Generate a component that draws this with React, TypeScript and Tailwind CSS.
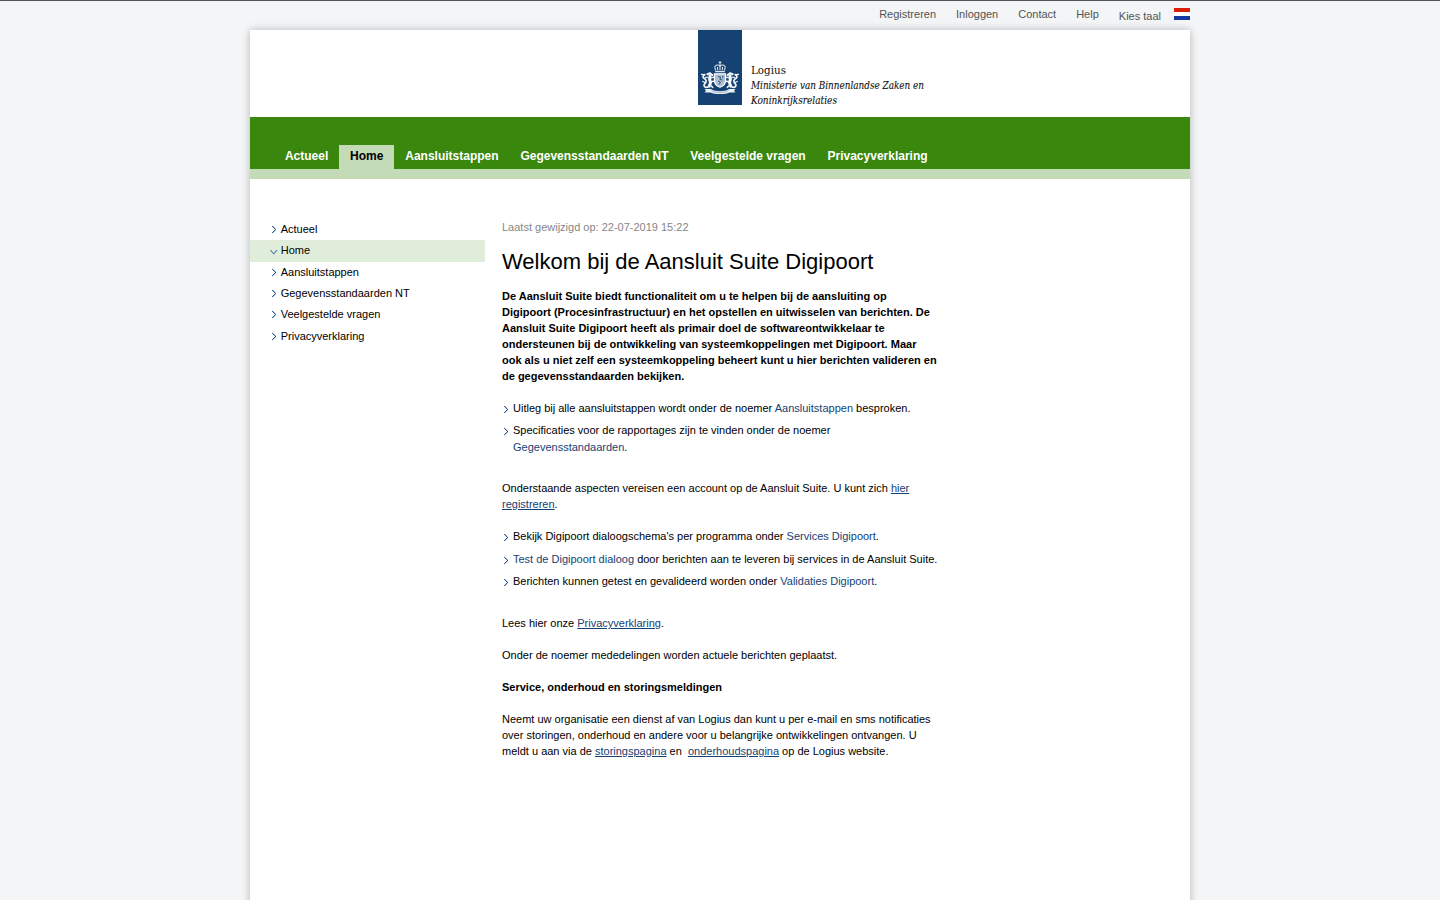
import type { ReactNode } from "react";

const tabs = ["Actueel", "Home", "Aansluitstappen", "Gegevensstandaarden NT", "Veelgestelde vragen", "Privacyverklaring"];

function ChevronRight({ className = "" }: { className?: string }) {
  return (
    <svg width="5" height="9" viewBox="0 0 5 9" className={className} fill="#2c5f92" shapeRendering="crispEdges">
      <path d="M0 1h1v1H0zM1 2h1v1H1zM2 3h1v1H2zM3 4h1v1H3zM2 5h1v1H2zM1 6h1v1H1zM0 7h1v1H0z" />
      <path d="M1 1h1v1H1zM2 2h1v1H2zM3 3h1v1H3zM3 5h1v1H3zM2 6h1v1H2zM1 7h1v1H1z" opacity="0.35" />
    </svg>
  );
}

function ChevronDown({ className = "" }: { className?: string }) {
  return (
    <svg width="8" height="6" viewBox="0 0 8 6" className={className} fill="none" stroke="#4f7fa6" strokeWidth="1.1">
      <path d="M0.4 1.2L3.75 4.8L7.1 1.2" />
    </svg>
  );
}

function Flag() {
  return (
    <svg width="16" height="12" viewBox="0 0 16 12" shapeRendering="crispEdges">
      <rect width="16" height="4" fill="#d81e05" />
      <rect y="4" width="16" height="4" fill="#fff" />
      <rect y="8" width="16" height="4" fill="#1539a0" />
    </svg>
  );
}

function Lion() {
  return (
    <g fill="none" stroke="#f4f7fa" strokeLinecap="round" strokeLinejoin="round">
      <path d="M12 17L11.6 20.5L12.6 23.5L11.2 27.2" strokeWidth="3" />
      <path d="M12.6 19.2L15.6 18.2M12.6 22.8L15.8 22.2M12 26L14.8 28.4" strokeWidth="1.4" />
      <path d="M9.4 15.2L12 14.2L14.2 16" strokeWidth="2.1" />
      <path d="M9.6 28.2C6 28.8 5 26.2 7 24.4C8.8 22.6 8.4 20.8 6.4 19.6C4.6 18.6 4.6 16.4 6.8 15.6" strokeWidth="1.7" />
      <path d="M3.4 15.4L6 15.6M4.8 22.4L7 23.6M7.6 18.4L10 18.2" strokeWidth="1.1" />
    </g>
  );
}

function Logo() {
  return (
    <svg width="320" height="84" viewBox="0 0 320 84" role="img">
      <rect width="44" height="75" fill="#154273" />
      <g fill="none" stroke="#dce5ee" strokeWidth="1.05">
        <path d="M17.5 40.5L16.8 37C17.4 34.6 20 34.6 22 36.2C24 34.6 26.6 34.6 27.2 37L26.5 40.5" />
        <path d="M22 31V40M19.6 37V40M24.4 37V40M20.7 32.4H23.3" />
        <path d="M17.2 41.5H26.8" strokeWidth="1.5" />
      </g>
      <g transform="translate(0 29)">
        <path d="M16.4 14.8H27.6V21.2C27.6 25 25 27.2 22 28.2C19 27.2 16.4 25 16.4 21.2Z" fill="#aebfd2" stroke="#fff" strokeWidth="1.2" />
        <path d="M20 17.5L22.5 18L22 20.5L24.6 21M20 22L22.5 23L21 25.5M24.8 16.7V19" stroke="#234c79" strokeWidth="0.9" fill="none" />
        <Lion />
        <g transform="matrix(-1 0 0 1 44 0)"><Lion /></g>
        <path d="M6.5 30L12.8 30.1C17 33.1 27 33.1 31.2 30.1L37.5 30L36 31.7L37.5 33.4L31.5 33.4C27 35.6 17 35.6 12.5 33.4L6.5 33.4L8 31.7Z" fill="#eef2f6" />
        <path d="M13.5 32C18 34 26 34 30.5 32" fill="none" stroke="#5877a0" strokeWidth="0.5" />
      </g>
      <g fill="#111">
        <text x="53" y="44" fontSize="11.5" textLength="35" lengthAdjust="spacingAndGlyphs" className="font-['DejaVu_Serif',serif] [font-stretch:condensed]">Logius</text>
        <g fontStyle="italic" fontSize="11" stroke="#111" strokeWidth="0.1" className="font-['DejaVu_Serif',serif] [font-stretch:condensed]">
          <text x="53" y="59" textLength="173" lengthAdjust="spacingAndGlyphs">Ministerie van Binnenlandse Zaken en</text>
          <text x="53" y="74" textLength="86" lengthAdjust="spacingAndGlyphs">Koninkrijksrelaties</text>
        </g>
      </g>
    </svg>
  );
}

function A({ children, underline = false }: { children: ReactNode; underline?: boolean }) {
  return <a href="#" className={underline ? "text-[#154273] underline" : "text-[#154273]"}>{children}</a>;
}

function Item({ children, className = "" }: { children: ReactNode; className?: string }) {
  return (
    <li className={`flex ${className}`}>
      <ChevronRight className="mt-[5px] mr-[4px] ml-[2px] shrink-0" />
      <span className="whitespace-nowrap">{children}</span>
    </li>
  );
}

export default function App() {
  return (
    <div className="h-[900px] overflow-hidden border-t border-[#535357] bg-[#f3f5f7] font-['Liberation_Sans',Arial,sans-serif] text-[11px] leading-4 text-black">
      <div className="mx-auto w-[940px]">
        <div className="flex h-[29px] justify-end pt-[5px] text-[#535353]">
          <a href="#" className="mr-5">Registreren</a>
          <a href="#" className="mr-5">Inloggen</a>
          <a href="#" className="mr-5">Contact</a>
          <a href="#" className="mr-5">Help</a>
          <span className="mr-[13px] pt-[2px]">Kies taal</span>
          <span className="pt-[2px]"><Flag /></span>
        </div>
        <div className="h-[880px] bg-white shadow-[0_0_8px_rgba(0,0,0,0.26)]">
          <header className="h-[87px] pl-[448px]"><Logo /></header>
          <nav className="flex h-[62px] items-end border-b-10 border-[#c4dbb7] bg-[#39870c] pl-6 text-[12px] font-bold text-white">
            {tabs.map((t) => (
              <a key={t} href="#" className={t === "Home" ? "h-6 bg-[#c4dbb7] px-[10.92px] pt-[3px] text-black" : "h-6 px-[10.92px] pt-[3px]"}>{t}</a>
            ))}
          </nav>
          <div className="flex pt-10">
            <ul className="w-[235px]">
              {tabs.map((t) => (
                <li key={t} className={t === "Home" ? "flex h-[21.35px] bg-[#e1eddb]" : "flex h-[21.35px]"}>
                  {t === "Home" ? <ChevronDown className="mt-[9px] mr-[2.7px] ml-5" /> : <ChevronRight className="mt-[6px] mr-[3.7px] ml-[22px]" />}
                  <span className="pt-[2px]">{t}</span>
                </li>
              ))}
            </ul>
            <main className="ml-[17px] w-[437px]">
              <p className="text-[#868686]">Laatst gewijzigd op: 22-07-2019 15:22</p>
              <h1 className="mt-[13px] h-10 text-[22px] leading-7">Welkom bij de Aansluit Suite Digipoort</h1>
              <p className="font-bold">De Aansluit Suite biedt functionaliteit om u te helpen bij de aansluiting op<br />Digipoort (Procesinfrastructuur) en het opstellen en uitwisselen van berichten. De<br />Aansluit Suite Digipoort heeft als primair doel de softwareontwikkelaar te<br />ondersteunen bij de ontwikkeling van systeemkoppelingen met Digipoort. Maar<br />ook als u niet zelf een systeemkoppeling beheert kunt u hier berichten valideren en<br />de gegevensstandaarden bekijken.</p>
              <ul className="mt-4 h-20">
                <Item className="h-[22px]">Uitleg bij alle aansluitstappen wordt onder de noemer <A>Aansluitstappen</A> besproken.</Item>
                <Item className="leading-[17px]">Specificaties voor de rapportages zijn te vinden onder de noemer<br /><A>Gegevensstandaarden</A>.</Item>
              </ul>
              <p>Onderstaande aspecten vereisen een account op de Aansluit Suite. U kunt zich <A underline>hier<br />registreren</A>.</p>
              <ul className="mt-4 h-[87px]">
                <Item className="h-[23px]">Bekijk Digipoort dialoogschema's per programma onder <A>Services Digipoort</A>.</Item>
                <Item className="h-[22px]"><A>Test de Digipoort dialoog</A> door berichten aan te leveren bij services in de Aansluit Suite.</Item>
                <Item>Berichten kunnen getest en gevalideerd worden onder <A>Validaties Digipoort</A>.</Item>
              </ul>
              <p>Lees hier onze <A underline>Privacyverklaring</A>.</p>
              <p className="mt-4">Onder de noemer mededelingen worden actuele berichten geplaatst.</p>
              <p className="mt-4 font-bold">Service, onderhoud en storingsmeldingen</p>
              <p className="mt-4">Neemt uw organisatie een dienst af van Logius dan kunt u per e-mail en sms notificaties<br />over storingen, onderhoud en andere voor u belangrijke ontwikkelingen ontvangen. U<br />meldt u aan via de <A underline>storingspagina</A> en&nbsp; <A underline>onderhoudspagina</A> op de Logius website.</p>
            </main>
          </div>
        </div>
      </div>
    </div>
  );
}
